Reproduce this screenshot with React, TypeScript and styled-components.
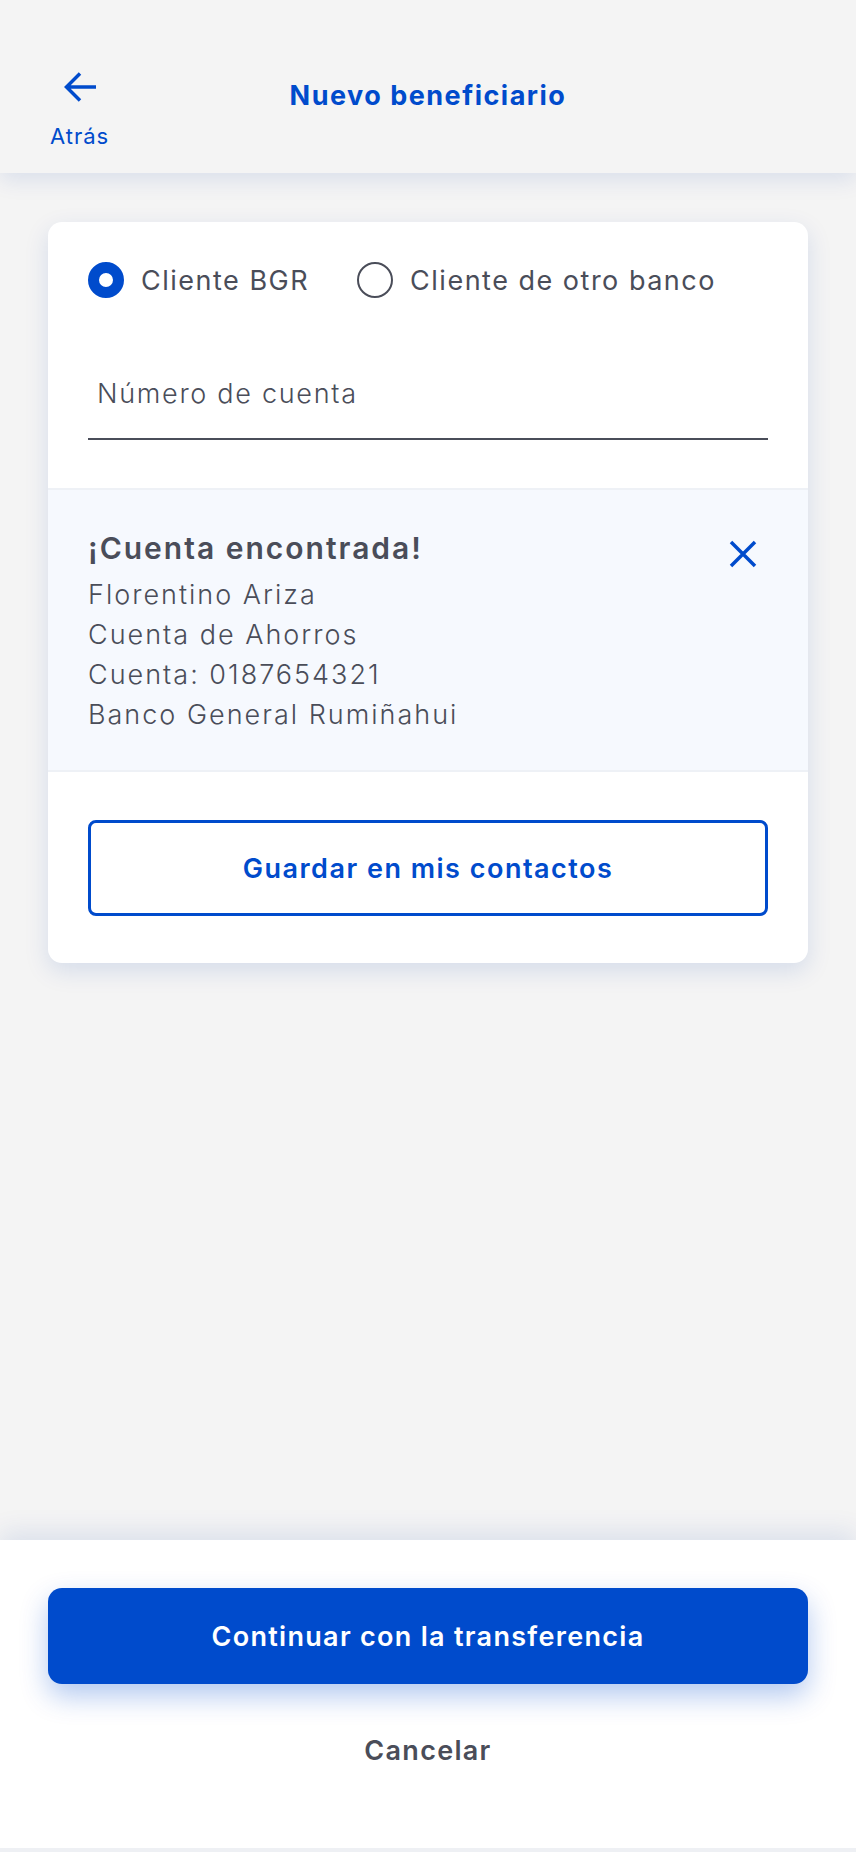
import React, { useState } from "react";
import styled, { createGlobalStyle } from "styled-components";

const GlobalStyle = createGlobalStyle`
  body {
    margin: 0;
    background: #f4f4f4;
    font-family: Inter, "Noto Sans", sans-serif;
    color: #4a4d59;
  }
  * { box-sizing: border-box; }
`;

const BLUE = "#004bcc";
const GREY = "#4a4d59";

const Screen = styled.div`
  min-height: 1852px;
  display: flex;
  flex-direction: column;
  background: #f4f4f4;
`;

const Header = styled.header`
  height: 173px;
  background: #f4f4f4;
  display: grid;
  grid-template-columns: 1fr auto 1fr;
  align-items: start;
  padding: 71px 50px 0;
  box-shadow: 0 8px 20px rgba(0, 60, 170, 0.1);
  position: relative;
  z-index: 1;
`;

const BackButton = styled.button`
  justify-self: start;
  display: flex;
  flex-direction: column;
  align-items: center;
  gap: 20px;
  background: none;
  border: none;
  padding: 0;
  color: ${BLUE};
  font-family: inherit;
  font-size: 22px;
  letter-spacing: 1px;
  cursor: pointer;
`;

const Title = styled.h1`
  margin: 8px 0 0;
  font-size: 27px;
  font-weight: 700;
  letter-spacing: 1.5px;
  color: ${BLUE};
`;

const Content = styled.main`
  flex: 1;
  padding: 49px 48px;
`;

const Card = styled.section`
  background: #fff;
  border-radius: 14px;
  box-shadow: 0 8px 24px rgba(0, 60, 170, 0.13);
  overflow: hidden;
`;

const FormArea = styled.div`
  padding: 40px 40px 48px;
  border-bottom: 2px solid #eef1f6;
`;

const RadioRow = styled.div`
  display: flex;
  align-items: center;
  gap: 48px;
`;

const RadioOption = styled.label`
  display: flex;
  align-items: center;
  gap: 17px;
  font-size: 27px;
  letter-spacing: 1.5px;
  color: ${GREY};
  cursor: pointer;
`;

const RadioDot = styled.span<{ $checked: boolean }>`
  width: 36px;
  height: 36px;
  border-radius: 50%;
  flex: none;
  background: #fff;
  border: ${(p) => (p.$checked ? `11px solid ${BLUE}` : `2px solid ${GREY}`)};
`;

const AccountInput = styled.input`
  display: block;
  width: 100%;
  height: 92px;
  margin-top: 50px;
  border: none;
  border-bottom: 2px solid ${GREY};
  padding: 0 9px;
  font-family: inherit;
  font-size: 27px;
  font-weight: 300;
  letter-spacing: 1.7px;
  color: ${GREY};
  outline: none;
  &::placeholder {
    color: ${GREY};
    font-weight: 300;
  }
`;

const FoundBox = styled.div`
  background: #f6f9fe;
  padding: 38px 40px 35px;
  display: flex;
  justify-content: space-between;
  align-items: flex-start;
  border-bottom: 2px solid #eef1f6;
`;

const FoundTitle = styled.h2`
  margin: 0 0 7px;
  font-size: 30px;
  line-height: 40px;
  font-weight: 600;
  letter-spacing: 2px;
  color: ${GREY};
`;

const FoundLine = styled.p`
  margin: 0;
  font-size: 27px;
  line-height: 40px;
  font-weight: 300;
  letter-spacing: 2px;
  color: ${GREY};
`;

const CloseButton = styled.button`
  background: none;
  border: none;
  padding: 0;
  margin: 12px 11px 0 0;
  display: flex;
  cursor: pointer;
`;

const ActionArea = styled.div`
  padding: 48px 40px 47px;
`;

const OutlineButton = styled.button`
  width: 100%;
  height: 96px;
  border: 3px solid ${BLUE};
  border-radius: 8px;
  background: #fff;
  color: ${BLUE};
  font-family: inherit;
  font-size: 27px;
  font-weight: 600;
  letter-spacing: 1.5px;
  cursor: pointer;
`;

const BottomSheet = styled.footer`
  background: #fff;
  padding: 48px 48px 70px;
  display: flex;
  flex-direction: column;
  align-items: center;
  gap: 38px;
  box-shadow: 0 -8px 24px rgba(0, 60, 170, 0.1);
  border-bottom: 4px solid #eef0f4;
`;

const PrimaryButton = styled.button`
  width: 100%;
  height: 96px;
  border: none;
  border-radius: 14px;
  background: ${BLUE};
  color: #fff;
  font-family: inherit;
  font-size: 27px;
  font-weight: 600;
  letter-spacing: 1.3px;
  box-shadow: 0 12px 28px rgba(0, 75, 204, 0.3);
  cursor: pointer;
`;

const TextButton = styled.button`
  height: 56px;
  background: none;
  border: none;
  color: ${GREY};
  font-family: inherit;
  font-size: 27px;
  font-weight: 600;
  letter-spacing: 1.3px;
  cursor: pointer;
`;

const ArrowLeft = () => (
  <svg width="34" height="32" viewBox="0 0 34 32" fill="none">
    <path d="M33 16H4M17 2.5L3.5 16 17 29.5" stroke={BLUE} strokeWidth="3.5" />
  </svg>
);

const CloseIcon = () => (
  <svg width="28" height="28" viewBox="0 0 28 28" fill="none">
    <path d="M2 2l24 24M26 2L2 26" stroke={BLUE} strokeWidth="3.5" />
  </svg>
);

const App = () => {
  const [client, setClient] = useState("bgr");
  return (
    <Screen>
      <GlobalStyle />
      <Header>
        <BackButton>
          <ArrowLeft />
          Atrás
        </BackButton>
        <Title>Nuevo beneficiario</Title>
      </Header>
      <Content>
        <Card>
          <FormArea>
            <RadioRow>
              <RadioOption onClick={() => setClient("bgr")}>
                <RadioDot $checked={client === "bgr"} />
                Cliente BGR
              </RadioOption>
              <RadioOption onClick={() => setClient("otro")}>
                <RadioDot $checked={client === "otro"} />
                Cliente de otro banco
              </RadioOption>
            </RadioRow>
            <AccountInput placeholder="Número de cuenta" />
          </FormArea>
          <FoundBox>
            <div>
              <FoundTitle>¡Cuenta encontrada!</FoundTitle>
              <FoundLine>Florentino Ariza</FoundLine>
              <FoundLine>Cuenta de Ahorros</FoundLine>
              <FoundLine>Cuenta: 0187654321</FoundLine>
              <FoundLine>Banco General Rumiñahui</FoundLine>
            </div>
            <CloseButton aria-label="Cerrar">
              <CloseIcon />
            </CloseButton>
          </FoundBox>
          <ActionArea>
            <OutlineButton>Guardar en mis contactos</OutlineButton>
          </ActionArea>
        </Card>
      </Content>
      <BottomSheet>
        <PrimaryButton>Continuar con la transferencia</PrimaryButton>
        <TextButton>Cancelar</TextButton>
      </BottomSheet>
    </Screen>
  );
};

export default App;
